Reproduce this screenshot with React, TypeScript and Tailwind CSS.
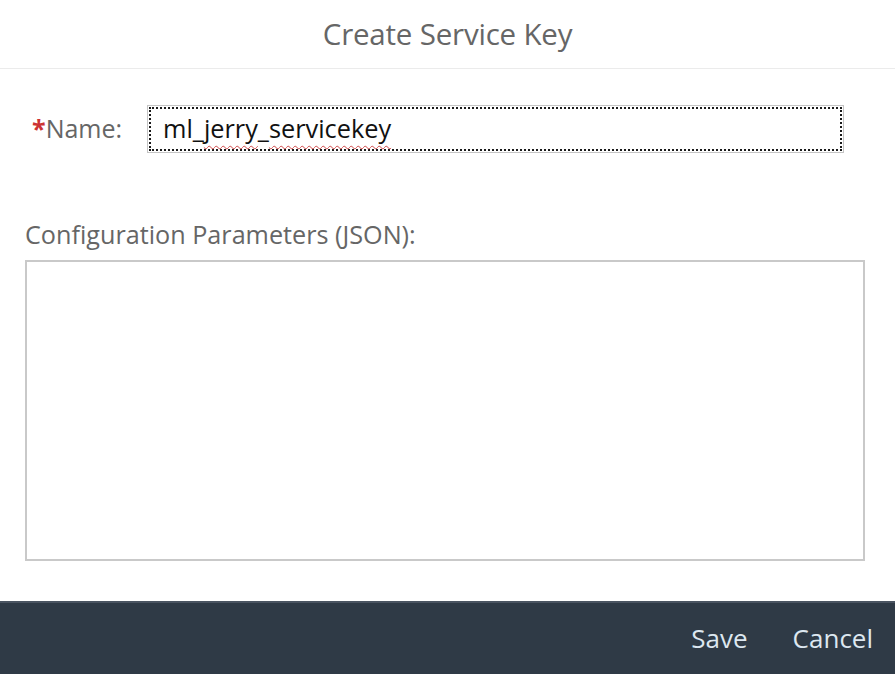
export default function App() {
  const font = { fontFamily: '"Open Sans", "Noto Sans", sans-serif' }
  return (
    <div className="w-[895px] h-[674px] bg-white flex flex-col overflow-hidden" style={font}>
      <header className="h-[69px] shrink-0 border-b border-[#ebebeb] flex items-center justify-center">
        <h1 className="text-[29.5px] text-[#666666] tracking-[-0.2px]">Create Service Key</h1>
      </header>

      <main className="flex-1 flex flex-col pl-[25px] pr-[30px]">
        <div className="flex items-center mt-[36px] h-[48px]">
          <label className="w-[122px] pl-[7px] text-[25px] text-[#666666] flex items-center">
            <span className="text-[#cc3333] font-bold text-[25px]">*</span>Name:
          </label>
          <div className="w-[697px] h-[48px] border border-[#c4c4c4] p-[1px]">
            <div className="h-full border-2 border-dotted border-[#1a1a1a] flex items-center pl-[12px] text-[25.3px] text-[#111111]">
              <span>
                ml_
                <span className="underline decoration-wavy decoration-[#d04a4a] decoration-1 underline-offset-[7px]">jerry</span>
                _
                <span className="underline decoration-wavy decoration-[#d04a4a] decoration-1 underline-offset-[7px]">servicekey</span>
              </span>
            </div>
          </div>
        </div>

        <label className="mt-[66px] text-[25.2px] text-[#666666] leading-[30px]">Configuration Parameters (JSON):</label>
        <textarea className="mt-[11px] w-[840px] h-[301px] border-2 border-[#c9c9c9] resize-none outline-none" />
      </main>

      <footer className="h-[73px] shrink-0 bg-[#2f3a46] border-t-2 border-[#4a5461] flex items-center justify-end pr-[22px] gap-[45px] text-[26px] text-[#dde7f0]">
        <button>Save</button>
        <button>Cancel</button>
      </footer>
    </div>
  )
}
